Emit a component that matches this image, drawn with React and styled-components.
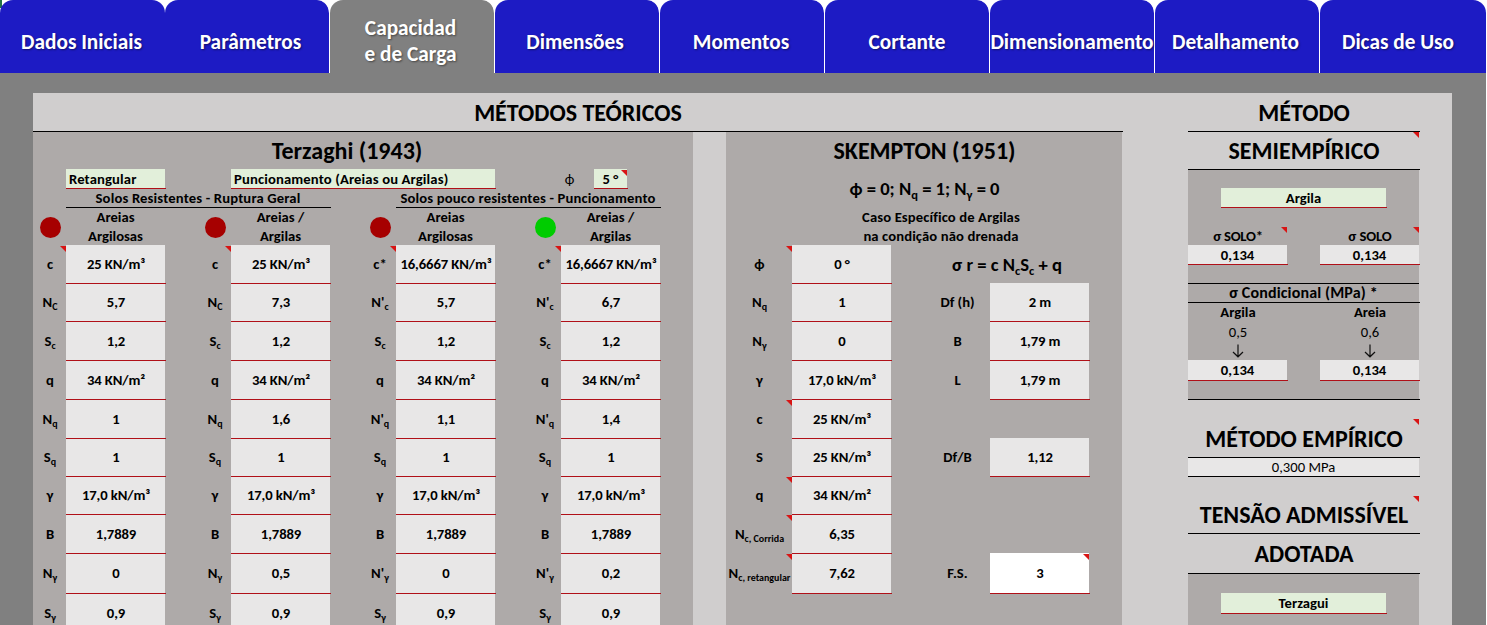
import React from 'react';
import styled, { createGlobalStyle, css } from 'styled-components';

const GlobalStyle = createGlobalStyle`
  * {
    box-sizing: border-box;
  }
  body {
    margin: 0;
    background: #fff;
    color: #000;
    font-family: Carlito, Lato, 'Open Sans', sans-serif;
    font-size: 14.67px;
    font-weight: bold;
    height: 625px;
    overflow: hidden;
  }
`;

const Page = styled.div`
  width: 1486px;
  height: 625px;
  overflow: hidden;
`;

const Tabs = styled.nav`
  display: flex;
  height: 73px;
  background: linear-gradient(#217346, #217346) 0 0 / 2px 8px no-repeat;
`;

const Tab = styled.div`
  flex: ${(props) => (props.$last ? '1 0 0' : '0 0 165px')};
  min-width: 0;
  display: flex;
  align-items: center;
  justify-content: center;
  padding-top: ${(props) => (props.$active ? '8px' : '10px')};
  padding-left: ${(props) => Math.max(props.$shift, 0) * 2}px;
  padding-right: ${(props) => Math.max(-props.$shift, 0) * 2}px;
  border-right: ${(props) => (props.$joined ? 'none' : '1px solid #fff')};
  border-radius: 13px 13px 0 0;
  background: ${(props) => (props.$active ? '#808080' : '#1d1bc4')};
  background-clip: padding-box;
  color: #fff;
  font-size: 21.3px;
  line-height: 26px;
  text-align: center;
  white-space: pre;
  text-shadow: 1px 1px 2px rgba(0, 0, 0, 0.45);
`;

const Frame = styled.div`
  height: 552px;
  padding: 20px 34px 0 33px;
  background: #808080;
`;

const Sheet = styled.main`
  display: flex;
  height: 100%;
  background: #d0cece;
`;

const Theory = styled.section`
  width: 1089px;
  display: flex;
  flex-direction: column;
`;

/* Horizontal rule of a cell; reaches one pixel past the column edge. */
const rule = css`
  position: relative;
  &::after {
    content: '';
    position: absolute;
    left: 0;
    right: -1px;
    bottom: 0;
    height: 1px;
    background: ${(props) => props.$rule || '#000'};
  }
`;

const Title = styled.h2`
  flex: none;
  display: flex;
  align-items: center;
  justify-content: center;
  margin: 0;
  height: ${(props) => props.$h || 39}px;
  padding-bottom: 1px;
  padding-left: 1px;
  padding-right: ${(props) => props.$pr || 0}px;
  font-size: 24px;
  white-space: nowrap;
  ${(props) => !props.$plain && rule}
`;

const Panels = styled.div`
  flex: 1;
  display: flex;
  justify-content: space-between;
  min-height: 0;
`;

const Panel = styled.div`
  width: ${(props) => props.$w}px;
  flex: none;
  background: #aeaaa9;
`;

const Inputs = styled.div`
  display: flex;
  height: 20px;
  padding-left: 33px;
`;

const Field = styled.div`
  width: ${(props) => props.$w}px;
  height: ${(props) => props.$h || 20}px;
  margin: ${(props) => props.$m || 0};
  padding: 0 3px 1px;
  display: flex;
  align-items: center;
  justify-content: ${(props) => (props.$center ? 'center' : 'flex-start')};
  background: ${(props) => props.$bg || '#e2efda'};
  font-weight: ${(props) => (props.$light ? 'normal' : 'bold')};
  letter-spacing: ${(props) => (props.$center ? 0 : '0.13px')};
  white-space: nowrap;
  ${rule}
`;

const Phi = styled.div`
  width: 51px;
  text-align: center;
  line-height: 21px;
  font-weight: normal;
  margin-left: 49px;
  margin-right: -1px;
`;

const Note = styled.i`
  position: absolute;
  top: ${(props) => props.$top || 0}px;
  right: 0;
  width: 6px;
  height: 6px;
  background: #d81414;
  clip-path: polygon(0 0, 100% 0, 100% 100%);
`;

const Groups = styled.div`
  display: flex;
  height: 19px;
  padding-left: 33px;
  gap: 66px;
`;

const Group = styled.div`
  width: 264px;
  line-height: 19px;
  text-align: center;
  letter-spacing: 0.15px;
  white-space: nowrap;
  ${rule}
`;

const Columns = styled.div`
  display: flex;
`;

const Column = styled.div`
  width: 165px;
`;

const ColumnHead = styled.div`
  display: grid;
  grid-template-columns: 33px 99px;
  height: 37px;
  align-items: center;
  text-align: center;
  line-height: 19px;
  white-space: pre;
`;

const Light = styled.span`
  width: 21px;
  height: 21px;
  margin-left: 7px;
  border-radius: 50%;
  background: ${(props) => (props.$on ? '#00cc00' : '#a60000')};
`;

const Row = styled.div`
  display: grid;
  grid-template-columns: ${(props) => props.$cols || '33px 99px'};
  height: ${(props) => props.$h}px;
`;

const Label = styled.div`
  position: relative;
  display: flex;
  align-items: center;
  justify-content: center;
  padding: 0 0 2px 1px;
  white-space: nowrap;
  sub {
    font-size: 10px;
    line-height: 0;
    vertical-align: -3px;
  }
`;

const Value = styled.div`
  display: flex;
  align-items: center;
  justify-content: center;
  padding: 0 0 2px 1px;
  margin-top: ${(props) => (props.$raised ? '-1px' : 0)};
  background: ${(props) => (props.$open ? '#fff' : '#e8e7e7')};
  letter-spacing: -0.1px;
  white-space: nowrap;
  ${rule}
`;

const Formula = styled.div`
  height: ${(props) => props.$h}px;
  display: flex;
  align-items: center;
  justify-content: center;
  padding: 0 0 1px 1px;
  font-size: 18.6px;
  white-space: nowrap;
  sub {
    font-size: 12.5px;
    line-height: 0;
    vertical-align: -4px;
  }
`;

const Case = styled.p`
  margin: 0;
  padding: 0 0 0 34px;
  height: 37px;
  line-height: 19px;
  text-align: center;
  letter-spacing: 0.1px;
  white-space: pre;
`;

const Side = styled.aside`
  width: 231px;
  margin-left: 66px;
  display: flex;
  flex-direction: column;
`;

const SidePanel = styled.div`
  flex: none;
  height: ${(props) => props.$h}px;
  background: #aeaaa9;
  ${(props) => props.$closed && rule}
`;

const Pair = styled.div`
  display: flex;
  justify-content: space-between;
  height: ${(props) => props.$h}px;
  padding-top: ${(props) => props.$pt || 0}px;
`;

const PairItem = styled.div`
  position: relative;
  width: 99px;
  padding-left: 1px;
  text-align: center;
  line-height: ${(props) => props.$lh || 19}px;
  font-weight: ${(props) => (props.$light ? 'normal' : 'bold')};
  letter-spacing: ${(props) => props.$ls || 0}px;
`;

const Band = styled.div`
  height: 20px;
  line-height: 18px;
  text-align: center;
  border-top: 1px solid #000;
  font-size: 16px;
  letter-spacing: 0.15px;
  ${rule}
`;

const RED = '#b01018';
const HEIGHTS = [39, 38, 39, 39, 39, 38, 38, 39, 40, 39];

const TABS = [
  { name: 'Dados Iniciais', shift: -1 },
  { name: 'Parâmetros', shift: 3.5 },
  { name: 'Capacidad\ne de Carga', shift: -1.5 },
  { name: 'Dimensões', shift: -2 },
  { name: 'Momentos', shift: -1 },
  { name: 'Cortante', shift: 0 },
  { name: 'Dimensionamento', shift: 0 },
  { name: 'Detalhamento', shift: -1.5 },
  { name: 'Dicas de Uso', shift: -5 },
];

const LABELS = [
  ['c'], ['N', 'C'], ['S', 'c'], ['q'], ['N', 'q'],
  ['S', 'q'], ['γ'], ['B'], ['N', 'γ'], ['S', 'γ'],
];

const LABELS_LOCAL = [
  ['c*'], ["N'", 'c'], ['S', 'c'], ['q'], ["N'", 'q'],
  ['S', 'q'], ['γ'], ['B'], ["N'", 'γ'], ['S', 'γ'],
];

const COLUMNS = [
  {
    head: 'Areias\nArgilosas',
    labels: LABELS,
    values: ['25 KN/m³', '5,7', '1,2', '34 KN/m²', '1', '1', '17,0 kN/m³', '1,7889', '0', '0,9'],
  },
  {
    head: 'Areias /\nArgilas',
    labels: LABELS,
    values: ['25 KN/m³', '7,3', '1,2', '34 KN/m²', '1,6', '1', '17,0 kN/m³', '1,7889', '0,5', '0,9'],
  },
  {
    head: 'Areias\nArgilosas',
    labels: LABELS_LOCAL,
    values: ['16,6667 KN/m³', '5,7', '1,2', '34 KN/m²', '1,1', '1', '17,0 kN/m³', '1,7889', '0', '0,9'],
  },
  {
    head: 'Areias /\nArgilas',
    on: true,
    labels: LABELS_LOCAL,
    values: ['16,6667 KN/m³', '6,7', '1,2', '34 KN/m²', '1,4', '1', '17,0 kN/m³', '1,7889', '0,2', '0,9'],
  },
];

const SKEMPTON = [
  { label: ['ϕ'], value: '0 °', note: true, formula: true },
  { label: ['N', 'q'], value: '1', right: ['Df (h)', '2 m'], raised: true },
  { label: ['N', 'γ'], value: '0', right: ['B', '1,79 m'] },
  { label: ['γ'], value: '17,0 kN/m³', right: ['L', '1,79 m'] },
  { label: ['c'], value: '25 KN/m³', note: true },
  { label: ['S'], value: '25 KN/m³', right: ['Df/B', '1,12'], raised: true },
  { label: ['q'], value: '34 KN/m²', note: true },
  { label: ['N', 'c, Corrida'], value: '6,35', note: true },
  { label: ['N', 'c, retangular'], value: '7,62', note: true, right: ['F.S.', '3'], raised: true, open: true },
];

const Symbol = ({ parts }) => (
  <span>
    {parts[0]}
    {parts[1] && <sub>{parts[1]}</sub>}
  </span>
);

const Terzaghi = () => (
  <Panel $w={660}>
    <Title $plain $h={37} $pr={33}>Terzaghi (1943)</Title>
    <Inputs>
      <Field $w={99} $rule={RED}>Retangular</Field>
      <Field $w={264} $m="0 0 0 66px" $rule={RED}>
        Puncionamento (Areias ou Argilas)
      </Field>
      <Phi>ϕ</Phi>
      <Field $w={33} $center $rule={RED}>
        5 °
        <Note $top={1} />
      </Field>
    </Inputs>
    <Groups>
      <Group>Solos Resistentes - Ruptura Geral</Group>
      <Group>Solos pouco resistentes - Puncionamento</Group>
    </Groups>
    <Columns>
      {COLUMNS.map((column, c) => (
        <Column key={c}>
          <ColumnHead>
            <Light $on={column.on} />
            <span>{column.head}</span>
          </ColumnHead>
          {column.values.map((value, i) => (
            <Row key={i} $h={HEIGHTS[i]}>
              <Label>
                <Symbol parts={column.labels[i]} />
                {i === 0 && <Note $top={1} />}
              </Label>
              <Value $rule={RED}>{value}</Value>
            </Row>
          ))}
        </Column>
      ))}
    </Columns>
  </Panel>
);

const Skempton = () => (
  <Panel $w={396}>
    <Title $plain $h={37}>SKEMPTON (1951)</Title>
    <Formula $h={39}>
      <span>
        ϕ = 0; N<sub>q</sub> = 1; N<sub>γ</sub> = 0
      </span>
    </Formula>
    <Case>{'Caso Específico de Argilas\nna condição não drenada'}</Case>
    {SKEMPTON.map((row, i) => (
      <Row key={i} $h={HEIGHTS[i]} $cols={row.formula ? '66px 99px 231px' : '66px 99px 33px 66px 99px'}>
        <Label>
          <Symbol parts={row.label} />
          {row.note && <Note $top={i === 0 ? 1 : 0} />}
        </Label>
        <Value $rule={RED}>{row.value}</Value>
        {row.formula && (
          <Formula $h={39}>
            <span>
              σ r = c N<sub>c</sub>S<sub>c</sub> + q
            </span>
          </Formula>
        )}
        {row.right && (
          <>
            <span />
            <Label>{row.right[0]}</Label>
            <Value $rule={RED} $raised={row.raised} $open={row.open}>
              {row.right[1]}
              {row.open && <Note $top={1} />}
            </Value>
          </>
        )}
      </Row>
    ))}
  </Panel>
);

const Spacer = styled.div`
  flex: 0 0 19px;
`;

const ArrowIcon = styled.svg`
  display: block;
  margin: 3px auto 0;
`;

const Arrow = () => (
  <ArrowIcon width="12" height="14" viewBox="0 0 12 14" fill="none" stroke="#111" strokeWidth="1.2">
    <path d="M6 0.5V12.5M1 8L6 12.8L11 8" />
  </ArrowIcon>
);

const Methods = () => (
  <Side>
    <Title>MÉTODO</Title>
    <Title $h={38}>
      SEMIEMPÍRICO
      <Note />
    </Title>
    <SidePanel $h={230} $closed>
      <Pair $h={57} $pt={18}>
        <Field $w={165} $m="0 33px" $center $rule={RED}>Argila</Field>
      </Pair>
      <Pair $h={18}>
        <PairItem $ls={-0.25}>
          σ SOLO*
          <Note />
        </PairItem>
        <PairItem $ls={-0.1}>
          σ SOLO
          <Note />
        </PairItem>
      </Pair>
      <Pair $h={38}>
        <Field $w={99} $center $bg="#e8e7e7" $rule={RED}>0,134</Field>
        <Field $w={99} $center $bg="#e8e7e7" $rule={RED}>0,134</Field>
      </Pair>
      <Band>σ Condicional (MPa) *</Band>
      <Pair $h={19}>
        <PairItem>Argila</PairItem>
        <PairItem>Areia</PairItem>
      </Pair>
      <Pair $h={19}>
        <PairItem $light $lh={21}>0,5</PairItem>
        <PairItem $light $lh={21}>0,6</PairItem>
      </Pair>
      <Pair $h={19}>
        <PairItem><Arrow /></PairItem>
        <PairItem><Arrow /></PairItem>
      </Pair>
      <Pair $h={21}>
        <Field $w={99} $h={21} $center $bg="#e8e7e7" $rule={RED}>0,134</Field>
        <Field $w={99} $h={21} $center $bg="#e8e7e7" $rule={RED}>0,134</Field>
      </Pair>
    </SidePanel>
    <Spacer />
    <Title>
      MÉTODO EMPÍRICO
      <Note />
    </Title>
    <Field $w={231} $h={19} $center $light $bg="#e8e7e7">0,300 MPa</Field>
    <Spacer />
    <Title $h={38}>
      TENSÃO ADMISSÍVEL
      <Note />
    </Title>
    <Title $h={40}>ADOTADA</Title>
    <SidePanel $h={60}>
      <Pair $h={60} $pt={19}>
        <Field $w={165} $h={21} $m="0 33px" $center $rule={RED}>Terzagui</Field>
      </Pair>
    </SidePanel>
  </Side>
);

const App = () => (
  <Page>
    <GlobalStyle />
    <Tabs>
      {TABS.map((tab, i) => (
        <Tab
          key={tab.name}
          $active={i === 2}
          $joined={i === 0 || i === 8}
          $last={i === 8}
          $shift={tab.shift}
        >
          {tab.name}
        </Tab>
      ))}
    </Tabs>
    <Frame>
      <Sheet>
        <Theory>
          <Title>MÉTODOS TEÓRICOS</Title>
          <Panels>
            <Terzaghi />
            <Skempton />
          </Panels>
        </Theory>
        <Methods />
      </Sheet>
    </Frame>
  </Page>
);

export default App;
